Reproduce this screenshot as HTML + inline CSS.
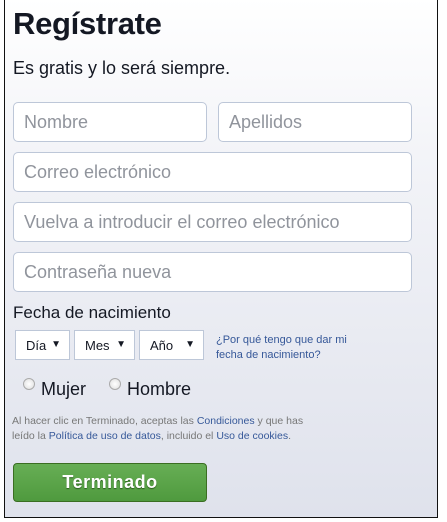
<!DOCTYPE html>
<html><head><meta charset="utf-8"><style>
*{margin:0;padding:0;box-sizing:border-box}
body{width:447px;height:522px;background:#fff;font-family:"Liberation Sans",sans-serif;position:relative;overflow:hidden}
.box{position:absolute;left:4px;top:-2px;width:434px;height:520px;border:1px solid #111;border-top:none;background:linear-gradient(#fff 0%,#f3f4f8 30%,#dfe2ec 100%)}
.a{position:absolute}
h1{position:absolute;left:13px;top:6px;font-size:31px;font-weight:bold;color:#141823;letter-spacing:-0.3px}
.sub{left:13px;top:58px;font-size:18px;color:#141823}
.in{position:absolute;background:#fff;border:1px solid #bdc7d8;border-radius:5px;height:40px;font-size:18px;color:#90949c;padding:9px 10px;line-height:20px}
.sel{position:absolute;top:330px;height:30px;background:#fff;border:1px solid #bdc7d8;font-size:13px;color:#141823;padding:7px 10px}
.sel span{position:absolute;right:8px;top:8px;font-size:10px}
.lk{color:#365899}
.rad{width:12px;height:12px;border-radius:50%;border:1px solid #aaa;background:radial-gradient(#fff,#ddd);top:378px}
.btn{left:13px;top:463px;width:194px;height:39px;border:1px solid #3b6e22;border-radius:4px;background:linear-gradient(#67ae55,#4f9a3e);color:#fff;font-weight:bold;font-size:18px;text-align:center;line-height:37px;text-shadow:0 1px 1px #2b5c1e;letter-spacing:0.5px}
</style></head><body>
<div class="box"></div>
<h1>Regístrate</h1>
<div class="a sub">Es gratis y lo será siempre.</div>
<div class="in" style="left:13px;top:102px;width:194px">Nombre</div>
<div class="in" style="left:218px;top:102px;width:194px">Apellidos</div>
<div class="in" style="left:13px;top:152px;width:399px">Correo electrónico</div>
<div class="in" style="left:13px;top:202px;width:399px">Vuelva a introducir el correo electrónico</div>
<div class="in" style="left:13px;top:252px;width:399px">Contraseña nueva</div>
<div class="a" style="left:13px;top:303px;font-size:17px;color:#141823">Fecha de nacimiento</div>
<div class="sel" style="left:15px;width:55px">Día<span>▼</span></div>
<div class="sel" style="left:74px;width:61px">Mes<span>▼</span></div>
<div class="sel" style="left:139px;width:65px">Año<span>▼</span></div>
<div class="a lk" style="left:216px;top:333px;font-size:11px;line-height:15px">¿Por qué tengo que dar mi<br>fecha de nacimiento?</div>
<div class="a rad" style="left:23px"></div>
<div class="a" style="left:41px;top:379px;font-size:18px;color:#141823">Mujer</div>
<div class="a rad" style="left:109px"></div>
<div class="a" style="left:127px;top:379px;font-size:18px;color:#141823">Hombre</div>
<div class="a" style="left:12px;top:414px;font-size:10.5px;line-height:15px;color:#777">Al hacer clic en Terminado, aceptas las <span class="lk">Condiciones</span> y que has<br>leído la <span class="lk">Política de uso de datos</span>, incluido el <span class="lk">Uso de cookies</span>.</div>
<div class="a btn">Terminado</div>
</body></html>
